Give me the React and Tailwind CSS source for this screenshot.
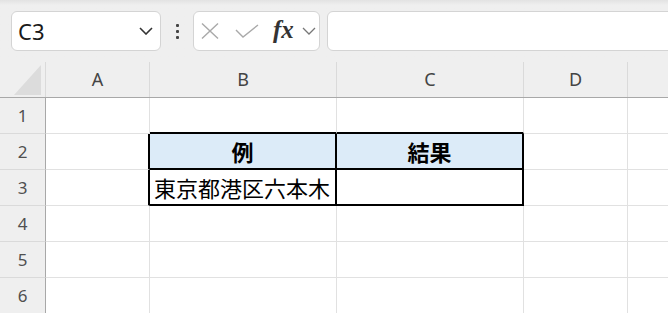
import React from "react";

const cols = [
  { key: "A", label: "A", w: "w-[104px]" },
  { key: "B", label: "B", w: "w-[187px]" },
  { key: "C", label: "C", w: "w-[187px]" },
  { key: "D", label: "D", w: "w-[104px]" },
  { key: "E", label: "", w: "w-[104px]" },
];

const latin = "font-['Noto_Sans','Open_Sans',sans-serif]";
const cjk = "font-['Noto_Sans_CJK_JP','Noto_Sans',sans-serif]";

function cellBorders(r, c) {
  const inTable = (rr, cc) => (rr === 2 || rr === 3) && (cc === 1 || cc === 2);
  let right = "border-r border-r-[#e1e1e1]";
  let bottom = "border-b border-b-[#e1e1e1]";
  if (inTable(r, c) || inTable(r, c + 1)) right = "border-r-2 border-r-black";
  if (inTable(r, c) || inTable(r + 1, c)) bottom = "border-b-2 border-b-black";
  return `${right} ${bottom}`;
}

function Row({ n }) {
  return (
    <div className="flex h-[36px] shrink-0">
      <div className={`w-[46px] shrink-0 flex items-center justify-center bg-[#efefef] border-r border-r-[#a8a8a8] border-b border-b-[#dadada] text-[17px] text-[#505050] ${latin}`}>
        {n}
      </div>
      {cols.map((col, i) => {
        const isHead = n === 2 && (i === 1 || i === 2);
        const text =
          n === 2 && i === 1 ? "例" : n === 2 && i === 2 ? "結果" : n === 3 && i === 1 ? "東京都港区六本木" : "";
        return (
          <div
            key={col.key}
            className={`${col.w} shrink-0 flex items-center ${cellBorders(n, i)} ${
              isHead ? "bg-[#dcebf8] justify-center font-bold" : "bg-white justify-start pl-[4px]"
            } ${cjk} text-[22px] leading-none text-black whitespace-nowrap overflow-visible`}
          >
            {text}
          </div>
        );
      })}
    </div>
  );
}

export default function App() {
  return (
    <div className="w-[668px] h-[313px] overflow-hidden bg-[#efefef] flex flex-col">
      {/* toolbar */}
      <div className="h-[62px] shrink-0 bg-gradient-to-b from-[#e2e2e2] via-[#efefef] via-[8%] to-[#efefef] flex items-start pt-[11px] pl-[11px]">
        <div className="w-[150px] shrink-0 h-[40px] rounded-[6px] border border-[#d4d4d4] bg-white flex items-center justify-between pl-[6px] pr-[7px]">
          <span className={`text-[22px] text-[#1a1a1a] ${latin} leading-none`}>C3</span>
          <svg width="14" height="8" viewBox="0 0 14 8" fill="none">
            <path d="M1 1 L7 7 L13 1" stroke="#333" strokeWidth="1.6" />
          </svg>
        </div>
        <div className="w-[32px] shrink-0 h-[40px] flex flex-col items-center justify-center gap-[3px]">
          <span className="w-[3px] h-[3px] bg-[#444] rounded-[1px]" />
          <span className="w-[3px] h-[3px] bg-[#444] rounded-[1px]" />
          <span className="w-[3px] h-[3px] bg-[#444] rounded-[1px]" />
        </div>
        <div className="w-[127px] shrink-0 h-[40px] rounded-[6px] border border-[#d4d4d4] bg-white flex items-center pl-[7px]">
          <svg width="18" height="16" viewBox="0 0 18 16" fill="none">
            <path d="M1 0.5 L17 15.5 M17 0.5 L1 15.5" stroke="#a9a9a9" strokeWidth="1.4" />
          </svg>
          <svg className="ml-[16px]" width="24" height="14" viewBox="0 0 24 14" fill="none">
            <path d="M1 6 L8 13 L23 1" stroke="#a9a9a9" strokeWidth="1.4" />
          </svg>
          <span className="ml-[14px] font-['Liberation_Serif',serif] italic font-semibold text-[25px] leading-none text-[#333] -mt-[4px]">fx</span>
          <svg className="ml-[8px]" width="14" height="8" viewBox="0 0 14 8" fill="none">
            <path d="M1 1 L7 7 L13 1" stroke="#777" strokeWidth="1.3" />
          </svg>
        </div>
        <div className="ml-[7px] w-[400px] shrink-0 h-[40px] rounded-[6px] border border-[#d4d4d4] bg-white" />
      </div>

      {/* column header */}
      <div className="flex h-[36px] shrink-0 bg-[#efefef] border-b border-b-[#a8a8a8]">
        <div className="w-[46px] shrink-0 border-r border-r-[#dadada] flex items-end justify-end pr-[3px] pb-[2px]">
          <svg width="28" height="30" viewBox="0 0 28 30">
            <polygon points="27,0 27,30 0,30" fill="#dcdcdc" />
          </svg>
        </div>
        {cols.map((col) => (
          <div
            key={col.key}
            className={`${col.w} shrink-0 flex items-center justify-center border-r border-r-[#dadada] text-[18px] text-[#444] ${latin}`}
          >
            {col.label}
          </div>
        ))}
      </div>

      {[1, 2, 3, 4, 5, 6].map((n) => (
        <Row key={n} n={n} />
      ))}
    </div>
  );
}
